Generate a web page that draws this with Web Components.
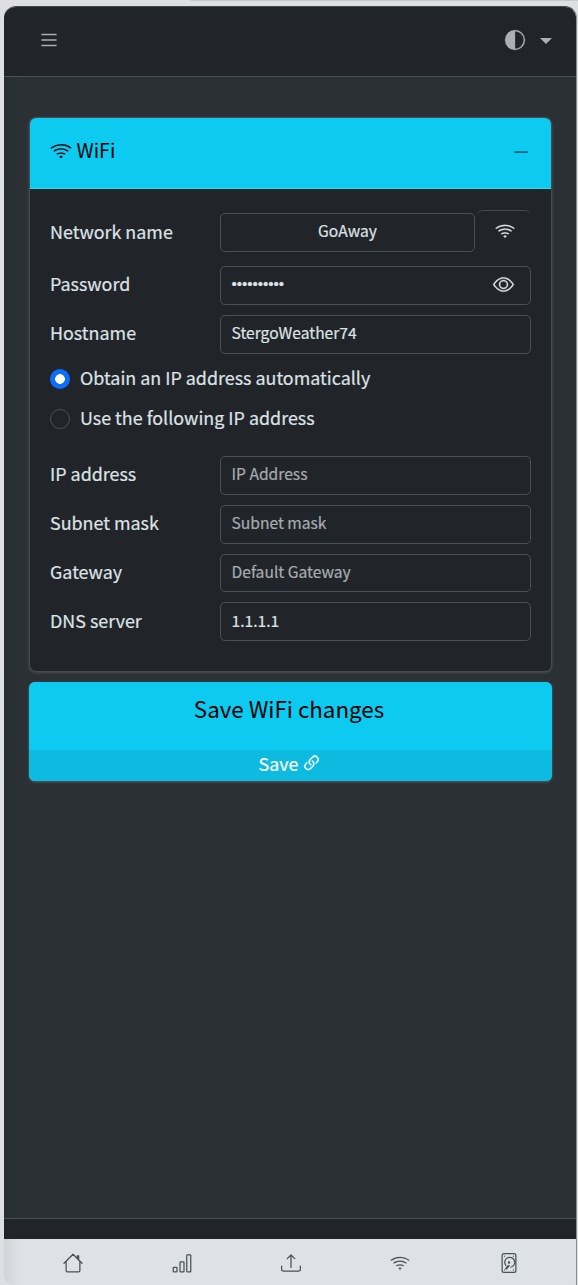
<!DOCTYPE html>
<html lang="en">
<head>
<meta charset="utf-8">
<title>WiFi settings</title>
<style>
html,body{margin:0;padding:0;height:1285px;overflow:hidden}
body{background:#dedfe3;font-family:"Noto Sans CJK SC","Noto Sans",sans-serif;font-size:17.900px;line-height:30px;color:#dee2e6;-webkit-text-stroke:.2px currentColor}
</style>
</head>
<body>
<wifi-app></wifi-app>
<script>
const ICONS={
wifi:'<path d="M15.384 6.115a.485.485 0 0 0-.047-.736A12.44 12.44 0 0 0 8 3C5.259 3 2.723 3.882.663 5.379a.485.485 0 0 0-.048.736.52.52 0 0 0 .668.05A11.45 11.45 0 0 1 8 4c2.507 0 4.827.802 6.716 2.164.205.148.49.13.668-.049"/><path d="M13.229 8.271a.482.482 0 0 0-.063-.745A9.46 9.46 0 0 0 8 6c-1.905 0-3.68.56-5.166 1.526a.48.48 0 0 0-.063.745.525.525 0 0 0 .652.065A8.46 8.46 0 0 1 8 7a8.46 8.46 0 0 1 4.576 1.336c.206.132.48.108.653-.065m-2.183 2.183c.226-.226.185-.605-.1-.75A6.5 6.5 0 0 0 8 9c-1.06 0-2.062.254-2.946.704-.285.145-.326.524-.1.75l.015.015c.16.16.407.19.611.09A5.5 5.5 0 0 1 8 10c.868 0 1.69.201 2.42.56.203.1.45.07.61-.091zM9.06 12.44c.196-.196.198-.52-.04-.66A2 2 0 0 0 8 11.5a2 2 0 0 0-1.02.28c-.238.14-.236.464-.04.66l.706.706a.5.5 0 0 0 .707 0z"/>',
list:'<path d="M2.500 3.400h11v1.200h-11zM2.500 7.400h11v1.200h-11zM2.500 11.400h11v1.200h-11z"/>',
half:'<path d="M8 15A7 7 0 1 0 8 1zm0 1A8 8 0 1 1 8 0a8 8 0 0 1 0 16"/>',
dash:'<path d="M2 7.300h12v1.500H2z"/>',
eye:'<path d="M16 8s-3-5.5-8-5.5S0 8 0 8s3 5.5 8 5.5S16 8 16 8M1.173 8a13 13 0 0 1 1.66-2.043C4.12 4.668 5.88 3.5 8 3.5s3.879 1.168 5.168 2.457A13 13 0 0 1 14.828 8q-.086.13-.195.288c-.335.48-.83 1.12-1.465 1.755C11.879 11.332 10.119 12.5 8 12.5s-3.879-1.168-5.168-2.457A13 13 0 0 1 1.172 8z"/><path d="M8 5.5a2.5 2.5 0 1 0 0 5 2.5 2.5 0 0 0 0-5M4.5 8a3.5 3.5 0 1 1 7 0 3.5 3.5 0 0 1-7 0"/>',
link:'<path d="M4.715 6.542 3.343 7.914a3 3 0 1 0 4.243 4.243l1.828-1.829A3 3 0 0 0 8.586 5.5L8 6.086a1 1 0 0 0-.154.199 2 2 0 0 1 .861 3.337L6.88 11.45a2 2 0 1 1-2.83-2.83l.793-.792a4 4 0 0 1-.128-1.287z"/><path d="M6.586 4.672A3 3 0 0 0 7.414 9.5l.775-.776a2 2 0 0 1-.896-3.346L9.12 3.55a2 2 0 1 1 2.83 2.83l-.793.792c.112.42.155.855.128 1.287l1.372-1.372a3 3 0 1 0-4.243-4.243z"/>',
house:'<path d="M.8 8.2 8 1l7.2 7.2M2.500 6.800v7.200a1 1 0 0 0 1 1h9a1 1 0 0 0 1-1V6.800" fill="none" stroke="currentColor" stroke-linecap="round" stroke-linejoin="round"/><path d="M11 1.800h2v4.400l-2-2z"/>',
chart:'<path d="M1.500 11.500h2a.5.5 0 0 1 .5.5v2.500a.5.5 0 0 1-.5.5h-2a.5.5 0 0 1-.5-.5V12a.5.5 0 0 1 .5-.5zM6.900 7h2.200a.5.5 0 0 1 .5.5v7a.5.5 0 0 1-.5.5H6.900a.5.5 0 0 1-.5-.5v-7a.5.5 0 0 1 .5-.5zM12.300 1.500h2.200a.5.5 0 0 1 .5.5v12.500a.5.5 0 0 1-.5.5h-2.200a.5.5 0 0 1-.5-.5V2a.5.5 0 0 1 .5-.5z" fill="none" stroke="currentColor"/>',
upload:'<path d="M.5 9.900a.5.5 0 0 1 .5.500v2.500a1 1 0 0 0 1 1h12a1 1 0 0 0 1-1v-2.500a.5.5 0 0 1 1 0v2.500a2 2 0 0 1-2 2H2a2 2 0 0 1-2-2v-2.500a.5.5 0 0 1 .5-.5"/><path d="M7.646 1.146a.5.5 0 0 1 .708 0l3 3a.5.5 0 0 1-.708.708L8.500 2.707V11.500a.5.5 0 0 1-1 0V2.707L5.354 4.854a.5.5 0 1 1-.708-.708z"/>',
disk:'<g fill="none" stroke="currentColor"><rect x="2.500" y=".5" width="11" height="15" rx="1.500"/><path d="M5.700 10.200a4 4 0 1 1 3.300 1.200"/></g><circle cx="8" cy="7.500" r="1"/><path d="M9 9.700 6.200 13.400 4.700 12.500l2.100-2.700z"/><circle cx="4.500" cy="2.500" r=".5"/><circle cx="11.500" cy="2.500" r=".5"/><circle cx="4.500" cy="13.500" r=".5"/><circle cx="11.500" cy="13.500" r=".5"/>',
caret:'<path d="M2 5h12L8 11z"/>'
};
const define=(name,render)=>customElements.define(name,class extends HTMLElement{
  constructor(){super();this.attachShadow({mode:'open'})}
  connectedCallback(){this.shadowRoot.innerHTML=render(this)}
});
define('ui-icon',el=>`<style>:host{display:inline-block;flex:none;width:${el.getAttribute('size')||20}px;height:${el.getAttribute('size')||20}px}svg{display:block;width:100%;height:100%;overflow:visible}.bold{stroke:currentColor;stroke-width:.2}</style><svg class="${el.hasAttribute('bold')?'bold':''}" viewBox="0 0 16 16" fill="currentColor">${ICONS[el.getAttribute('name')]}</svg>`);
define('top-bar',()=>`<style>
:host{display:flex;box-sizing:border-box;height:70px;align-items:center;justify-content:space-between;padding:0 22px 3px 34px;background:#212529;border-bottom:1px solid #495057;color:#adafb1}
.right{display:flex;align-items:center;gap:13px}
ui-icon[name=caret]{margin-top:1px}
</style><ui-icon name="list" size="22"></ui-icon><div class="right"><ui-icon name="half" size="20" bold></ui-icon><ui-icon name="caret" size="16"></ui-icon></div>`);
define('form-row',el=>`<style>
:host{display:grid;grid-template-columns:170px 1fr;align-items:center;height:39px}
:host([compact]){height:38px}
label{white-space:nowrap;margin-top:-5px}
:host(.network) label,:host(.last) label{margin-top:-3px}
.slot{display:flex;min-width:0;height:100%;align-items:flex-start}
</style><label>${el.getAttribute('label')}</label><div class="slot"><slot></slot></div>`);
define('text-field',()=>`<style>
:host{display:flex;box-sizing:border-box;flex:1;height:100%;padding:0 16px 5px 10.500px;align-items:center;justify-content:space-between;border:1px solid #495057;border-radius:5px;font-size:15.620px;line-height:24px;white-space:nowrap}
:host([centered]){flex:0 0 255px;justify-content:center;padding:0 10px 5px}
:host([empty]){color:#a7acb1}
:host([low]){padding-bottom:3px}
:host([secret]){font-family:"Liberation Sans",sans-serif;font-size:15px;padding-bottom:3px}
</style><slot></slot>`);
define('scan-button',()=>`<style>
:host{display:flex;box-sizing:border-box;width:54px;height:45px;margin:-3px 0 -3px 2px;flex:none;align-items:center;justify-content:center;padding:0 0 4px 2px;border-radius:6px;border-top:1px solid #43484d}
</style><ui-icon name="wifi" size="20" bold></ui-icon>`);
define('radio-option',()=>`<style>
:host{display:flex;align-items:center;gap:10px;height:40px;white-space:nowrap}
i{box-sizing:border-box;width:20px;height:20px;border:1px solid #495057;border-radius:50%}
:host([checked]) i{border:0;background:radial-gradient(circle,#fff 4.500px,#0d6efd 5.200px)}
span{margin-top:-4px}
</style><i></i><span><slot></slot></span>`);
define('settings-card',()=>`<style>
:host{display:block;box-sizing:border-box;height:553px;background:#212529;border-radius:6px;box-shadow:0 0 1px 1px #494d51,0 1px 3px 1px #494d51}
header{display:flex;box-sizing:border-box;height:71px;padding:0 21px 5px 20px;align-items:center;background:#0dcaf0;border-bottom:1px solid #3cd3f3;border-radius:6px 6px 0 0;color:#000;font-size:19.600px;-webkit-text-stroke:0}
.title{flex:1;margin:-2px 0 0 4.500px}
header ui-icon:last-child{color:#086579;margin-top:2px}
.body{padding:24px 20px 0 20px}
</style><header><ui-icon name="wifi" size="22"></ui-icon><span class="title"><slot name="title"></slot></span><ui-icon name="dash" size="18"></ui-icon></header><div class="body"><slot></slot></div>`);
define('save-box',()=>`<style>
:host{display:block;box-sizing:border-box;height:99px;border-radius:6px;overflow:hidden;background:#0dcaf0;text-align:center;box-shadow:0 0 1px #777,0 1px 3px #555b60}
.title{height:68px;line-height:53px;color:#000;font-size:22.350px;text-indent:-3px;-webkit-text-stroke:0}
.link{display:flex;height:31px;align-items:center;justify-content:center;gap:3px;background:#0cbbdf;color:#fff}
.link span{margin-top:-5px}
.link ui-icon{margin-top:-4px}
</style><div class="title">Save WiFi changes</div><div class="link"><span>Save</span><ui-icon name="link" size="21" bold></ui-icon></div>`);
define('bottom-nav',()=>`<style>
:host{display:grid;grid-template-columns:repeat(5,1fr);height:46px;padding:2px 13px 0 15px;background:linear-gradient(90deg,#d1d4d7,#dee2e6 16px);border-radius:0 0 10px 10px;color:#495057;place-items:center;box-sizing:border-box}
</style>${['house','chart','upload','wifi','disk'].map(n=>`<ui-icon name="${n}" size="20"></ui-icon>`).join('')}`);
define('wifi-app',()=>`<style>
:host{display:block;box-sizing:border-box;height:1285px;padding:6px 1px 0 4px;background:linear-gradient(#c9c9c9,#c9c9c9) 190px 0/388px 1px no-repeat,#dedfe3}
.window{display:flex;flex-direction:column;height:1279px;border-radius:12px 12px 0 0;overflow:hidden;border-top:1px solid #43484c;border-right:1px solid #8b8d90;box-sizing:border-box}
main{flex:1;box-sizing:border-box;background:linear-gradient(90deg,#282d30,#2b3035 16px);padding:41px 25px 0 26px}
form-row+form-row{margin-top:10px}
form-row.network+form-row{margin-top:14px}
.radios{margin:5px 0 17px}
save-box{margin:11px -1px 0}
.footer{height:20px;background:#212529;border-top:1px solid #495057}
</style><div class="window"><top-bar></top-bar><main>
<settings-card><span slot="title">WiFi</span>
<form-row class="network" label="Network name"><text-field centered>GoAway</text-field><scan-button></scan-button></form-row>
<form-row label="Password"><text-field secret><span>••••••••••</span><ui-icon name="eye" size="21" bold></ui-icon></text-field></form-row>
<form-row label="Hostname"><text-field>StergoWeather74</text-field></form-row>
<div class="radios"><radio-option checked>Obtain an IP address automatically</radio-option><radio-option>Use the following IP address</radio-option></div>
<form-row label="IP address"><text-field empty>IP Address</text-field></form-row>
<form-row label="Subnet mask"><text-field empty>Subnet mask</text-field></form-row>
<form-row label="Gateway" compact><text-field empty>Default Gateway</text-field></form-row>
<form-row class="last" label="DNS server"><text-field low>1.1.1.1</text-field></form-row>
</settings-card><save-box></save-box></main><div class="footer"></div><bottom-nav></bottom-nav></div>`);
</script>
</body>
</html>
